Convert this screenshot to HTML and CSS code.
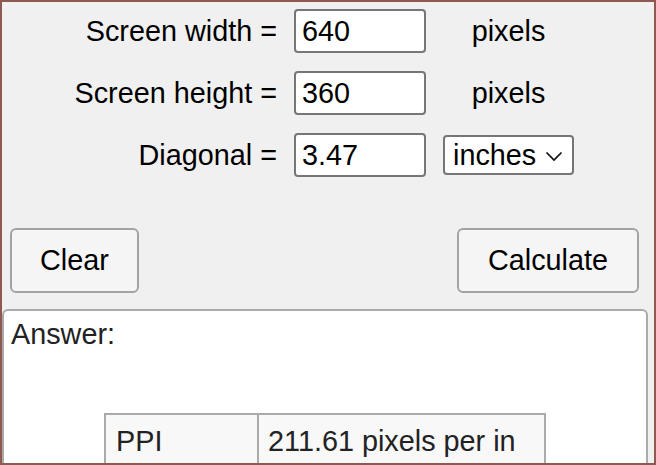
FILE: index.html
```html
<!DOCTYPE html>
<html>
<head>
<meta charset="utf-8">
<link rel="stylesheet" href="styles.css">
</head>
<body>
<div class="frame">
  <div class="form">
    <label class="lbl">Screen width =</label>
    <input class="field" type="text" value="640">
    <span class="unit">pixels</span>

    <label class="lbl">Screen height =</label>
    <input class="field" type="text" value="360">
    <span class="unit">pixels</span>

    <label class="lbl">Diagonal =</label>
    <input class="field" type="text" value="3.47">
    <div class="select">
      <span>inches</span>
      <svg class="chev" width="18" height="11" viewBox="0 0 18 11"><path d="M1.5 1.5 L9 9 L16.5 1.5" fill="none" stroke="#111" stroke-width="1.7"/></svg>
    </div>
  </div>

  <div class="buttons">
    <button class="btn">Clear</button>
    <button class="btn">Calculate</button>
  </div>

  <div class="answer">
    <div class="answer-title">Answer:</div>
    <table class="result">
      <tr><td class="k">PPI</td><td class="v">211.61 pixels per in</td></tr>
    </table>
  </div>
</div>
</body>
</html>
```

FILE: styles.css
```css
* { box-sizing: border-box; }
html, body {
  margin: 0;
  padding: 0;
  background: #f0f0f0;
}
body {
  font-family: "Liberation Sans", Arial, sans-serif;
  font-size: 28.8px;
  color: #000;
}
.frame {
  width: 656px;
  height: 465px;
  border: 2px solid #8e5a4f;
  background: #f0f0f0;
  overflow: hidden;
}
.form {
  display: grid;
  grid-template-columns: 275px 132px 131px;
  column-gap: 17px;
  row-gap: 18px;
  align-items: center;
  padding-top: 7px;
}
.lbl {
  text-align: right;
  line-height: 33px;
}
.field {
  font-family: inherit;
  font-size: 28.8px;
  height: 44px;
  width: 132px;
  border: 2px solid #767676;
  border-radius: 4px;
  background: #fff;
  padding: 0 6px;
  color: #000;
  margin: 0;
}
.unit {
  text-align: center;
  line-height: 33px;
}
.select {
  height: 40px;
  width: 131px;
  border: 2px solid #767676;
  border-radius: 4px;
  background: #fff;
  display: flex;
  align-items: center;
  padding: 0 0 0 8px;
  gap: 9px;
}
.chev { margin-top: 2px; }
.buttons {
  display: flex;
  justify-content: space-between;
  padding: 0 15px 0 8px;
  margin-top: 51px;
}
.btn {
  font-family: inherit;
  font-size: 28.8px;
  height: 65px;
  padding: 0;
  background: #f5f5f5;
  border: 2px solid #a3a3a3;
  border-radius: 6px;
  color: #000;
}
.btn:first-child { width: 129px; }
.btn:last-child { width: 182px; }
.answer {
  margin-top: 16px;
  width: 646px;
  height: 200px;
  background: #fff;
  border: 2px solid #aaa;
  border-radius: 6px 6px 0 0;
  padding: 7px 7px;
  color: #222;
}
.answer-title {
  line-height: 33px;
}
.result {
  margin: 62px auto 0;
  border-collapse: collapse;
  width: 442px;
}
.result td {
  border: 2px solid #aaa;
  background: #f8f8f8;
  height: 55px;
  padding: 0 9px;
  color: #222;
  vertical-align: middle;
}
.result td.k { width: 153px; padding-left: 10px; }
```
